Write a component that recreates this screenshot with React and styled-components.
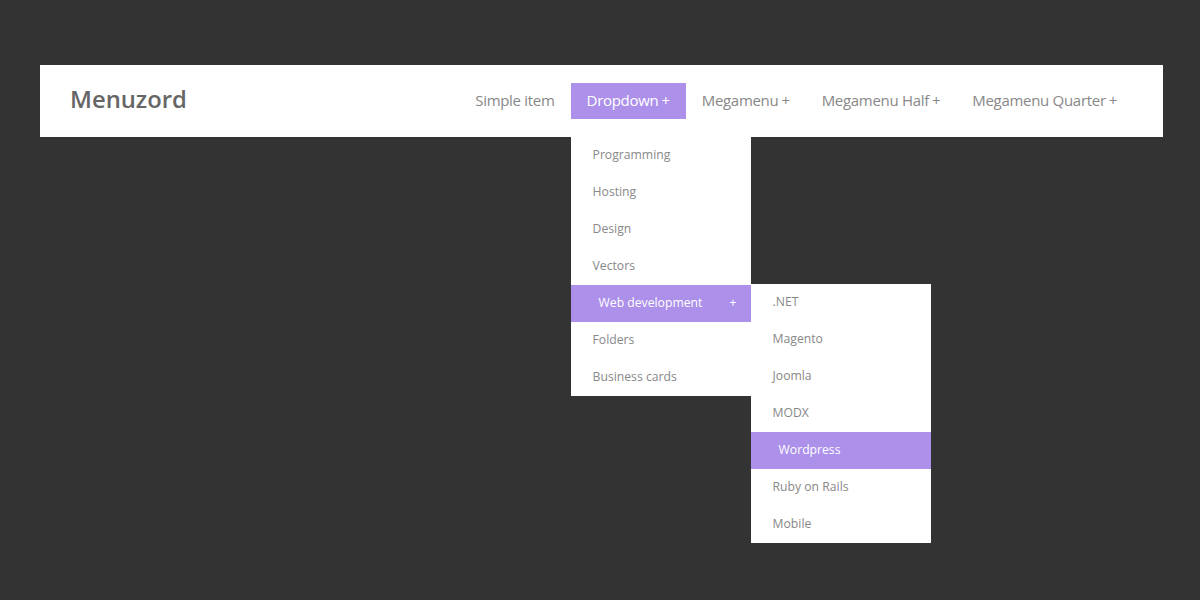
import React from 'react'
import styled, { createGlobalStyle } from 'styled-components'

const GlobalStyle = createGlobalStyle`
  html, body {
    margin: 0;
    padding: 0;
    background: #333333;
    font-family: 'Open Sans', 'DejaVu Sans', sans-serif;
  }
`

const Page = styled.div`
  width: 1200px;
  height: 600px;
  padding: 65px 37px 0 40px;
  box-sizing: border-box;
`

const Bar = styled.header`
  height: 72px;
  background: #fff;
  display: flex;
  align-items: center;
  justify-content: space-between;
  padding: 0 30px;
`

const Logo = styled.div`
  font-size: 23.8px;
  font-weight: 600;
  color: #666;
  padding-bottom: 4px;
`

const Nav = styled.ul`
  list-style: none;
  margin: 0;
  padding: 0;
  display: flex;
  align-items: center;
  height: 100%;
`

const NavItem = styled.li`
  position: relative;
  height: 36px;
  display: flex;
  align-items: center;
  padding: 0 16px 2px;
  box-sizing: border-box;
  font-size: 15px;
  letter-spacing: -0.3px;
  color: ${p => (p.$active ? '#fff' : '#888')};
  background: ${p => (p.$active ? '#ac90ea' : 'transparent')};
  white-space: nowrap;
`

const Plus = styled.span`
  margin-left: 3px;
`

const Dropdown = styled.ul`
  position: absolute;
  top: 54px;
  left: 0;
  width: 180px;
  list-style: none;
  margin: 0;
  padding: 0;
  background: #fff;
  letter-spacing: 0;
  z-index: 2;
`

const SubDropdown = styled(Dropdown)`
  top: -1px;
  left: 180px;
`

const DropItem = styled.li`
  position: relative;
  height: 37px;
  display: flex;
  align-items: center;
  justify-content: space-between;
  padding: 0 14px 3px ${p => (p.$active ? '28px' : '22px')};
  box-sizing: border-box;
  font-size: 12.2px;
  color: ${p => (p.$active ? '#fff' : '#888')};
  background: ${p => (p.$active ? '#ac90ea' : 'transparent')};
`

const sub = ['.NET', 'Magento', 'Joomla', 'MODX', 'Wordpress', 'Ruby on Rails', 'Mobile']
const main = ['Programming', 'Hosting', 'Design', 'Vectors', 'Web development', 'Folders', 'Business cards']

const App = () => {
  return (
    <Page>
      <GlobalStyle />
      <Bar>
        <Logo>Menuzord</Logo>
        <Nav>
          <NavItem>Simple item</NavItem>
          <NavItem $active>
            Dropdown<Plus>+</Plus>
            <Dropdown>
              {main.map(m => (
                <DropItem key={m} $active={m === 'Web development'}>
                  {m}
                  {m === 'Web development' && (
                    <>
                      <span>+</span>
                      <SubDropdown>
                        {sub.map(s => (
                          <DropItem key={s} $active={s === 'Wordpress'}>
                            {s}
                          </DropItem>
                        ))}
                      </SubDropdown>
                    </>
                  )}
                </DropItem>
              ))}
            </Dropdown>
          </NavItem>
          <NavItem>Megamenu<Plus>+</Plus></NavItem>
          <NavItem>Megamenu Half<Plus>+</Plus></NavItem>
          <NavItem>Megamenu Quarter<Plus>+</Plus></NavItem>
        </Nav>
      </Bar>
    </Page>
  )
}

export default App
